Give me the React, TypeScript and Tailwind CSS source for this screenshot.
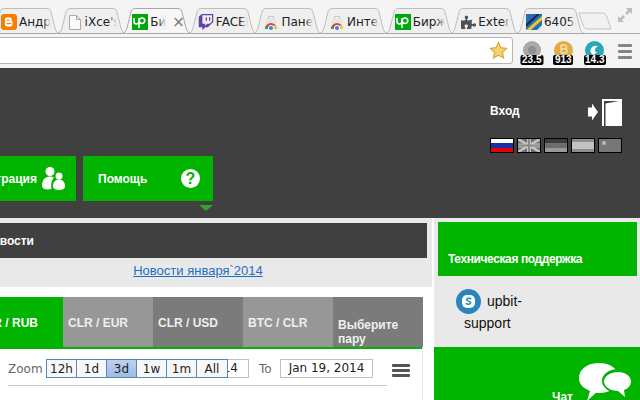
import { ReactNode } from "react";
import { FaTwitch, FaPuzzlePiece } from "react-icons/fa";

const UpLogo = () => (
  <div className="w-4 h-4 bg-[#00a80e] flex items-center justify-center shrink-0">
    <svg width="14" height="11" viewBox="0 0 14 11" fill="none" stroke="white" strokeWidth="1.6">
      <path d="M1 1v3.5a2.5 2.5 0 0 0 5 0V1M6 4.5c0-2 1-3.5 3-3.5a2.5 2.5 0 0 1 0 5.5c-1.4 0-2.2-.8-2.6-2M6 4.5V11" />
    </svg>
  </div>
);

const Blogger = () => (
  <svg width="16" height="16" viewBox="0 0 16 16" className="shrink-0">
    <rect width="16" height="16" rx="3" fill="#f57d00" />
    <path d="M5.5 3.5h3a2.2 2.2 0 0 1 2.2 2.4v.6c0 .5.3.7.8.7v3a2.4 2.4 0 0 1-2.4 2.3H6.2A2.3 2.3 0 0 1 3.9 10.3V5.6a2.1 2.1 0 0 1 1.6-2.1z" fill="white" />
    <path d="M6 6h2.2M6 9.7h3.8" stroke="#f57d00" strokeWidth="1.2" strokeLinecap="round" />
  </svg>
);

const Doc = () => (
  <svg width="16" height="16" viewBox="0 0 16 16" className="shrink-0" fill="#fafafa" stroke="#a9a9a9">
    <path d="M2.5 1.5h7l4 4v10h-11zM9.5 1.5v4h4" />
  </svg>
);

const Store = () => (
  <svg width="16" height="16" viewBox="0 0 16 16" className="shrink-0">
    <path d="M3 5h10l1.5 10h-13z" fill="#e6e6e6" />
    <path d="M5.5 5V2.5h5V5" fill="none" stroke="#c9c9c9" />
    <path d="M2 15a6 6 0 0 1 6-6 6 6 0 0 1 5 2.6L8 12z" fill="#dc4437" />
    <path d="M2 15a6 6 0 0 1 1-3.3L6 15z" fill="#2aa14a" />
    <path d="M13 11.6A6 6 0 0 1 14 15H10z" fill="#f4c20d" />
    <circle cx="8" cy="14" r="2.6" fill="#4285f4" stroke="white" />
  </svg>
);

const Puzzle = () => (
  <div className="w-4 h-4 flex items-center justify-center shrink-0">
    <FaPuzzlePiece size={15} color="#4b5257" />
  </div>
);

const TwitchIcon = () => (
  <div className="w-4 h-4 flex items-center justify-center shrink-0">
    <FaTwitch size={16} color="#6441a5" />
  </div>
);

const Ball = () => (
  <svg width="16" height="16" viewBox="0 0 16 16" className="shrink-0">
    <rect width="16" height="16" fill="#2a6cb0" />
    <path d="M0 16L16 2v4L5 16z" fill="#e9c33b" />
    <path d="M0 10L11 0h3L0 13z" fill="#10294f" />
    <path d="M11 16l5-5v5z" fill="#dfe8f2" />
  </svg>
);

const tabs: { icon: ReactNode; label: string; active?: boolean }[] = [
  { icon: <Blogger />, label: "Андрей" },
  { icon: <Doc />, label: "iXce's" },
  { icon: <UpLogo />, label: "Биржа", active: true },
  { icon: <TwitchIcon />, label: "FACEIT" },
  { icon: <Store />, label: "Панель" },
  { icon: <Store />, label: "Интернет" },
  { icon: <UpLogo />, label: "Биржа" },
  { icon: <Puzzle />, label: "Extensions" },
  { icon: <Ball />, label: "64058" },
];

const Tab = ({ icon, label, active }: { icon: ReactNode; label: string; active?: boolean }) => (
  <div className={`relative w-[71px] h-[26px] -mr-[5.4px] shrink-0 ${active ? "z-10" : ""}`}>
    <svg width="71" height="26" viewBox="0 0 71 26" className="absolute inset-0">
      <path
        d="M0 25.5C4 25.5 5 23 6 20L10 4C11 1 12 .5 15 .5H56C59 .5 60 1 61 4L65 20C66 23 67 25.5 71 25.5"
        fill={active ? "#f7f7f7" : "#efefef"}
        stroke={active ? "#a8a8a8" : "#bdbdbd"}
      />
    </svg>
    <div className="relative flex items-center pl-[11px] pt-[6px]">
      {icon}
      <div className={`relative ml-[2px] overflow-hidden whitespace-nowrap text-[12px] leading-4 text-[#222] ${active ? "w-[16px]" : "w-[32px]"}`}>
        {label}
        <div className="absolute inset-y-0 right-0 w-2 bg-gradient-to-r from-transparent to-[#efefef]" />
      </div>
      {active && <span className="ml-[6px] text-[15px] leading-4 text-[#777]">×</span>}
    </div>
  </div>
);

const Ext = ({ children, badge, w }: { children: ReactNode; badge: string; w: string }) => (
  <div className="relative w-[31.5px] h-[24px] flex justify-center shrink-0">
    {children}
    <div className={`absolute top-[14px] left-1/2 -translate-x-1/2 h-[10px] ${w} rounded-[2px] bg-black text-white text-[10px] leading-[10px] font-bold text-center font-['Liberation_Sans',sans-serif]`}>
      {badge}
    </div>
  </div>
);

const Chrome = () => (
  <div className="h-[68px] shrink-0 bg-[#f4f4f4] font-['DejaVu_Sans','Liberation_Sans',sans-serif]">
    <div className="h-[34px] flex items-end justify-between overflow-hidden border-b border-[#a9a9a9]">
      <div className="flex items-end -ml-[10px] -mb-px">
        {tabs.map((t, i) => (
          <Tab key={i} {...t} />
        ))}
        <svg width="34" height="18" viewBox="0 0 34 18" className="-ml-[2px] mb-[4px]">
          <path d="M1 1H24C27 1 28 3 29 5L33 17H9C7 17 6 16 5 13z" fill="#f1f1f1" stroke="#c4c4c4" />
        </svg>
      </div>
      <svg width="16" height="16" viewBox="0 0 16 16" fill="#b9bec0" className="mr-[7px] mb-[10px]">
        <path d="M9 1h6v6l-2-2-3 3-2-2 3-3zM1 15V9l2 2 3-3 2 2-3 3 2 2z" />
      </svg>
    </div>
    <div className="h-[33px] flex items-start pr-[8px]">
      <div className="w-[517px] -ml-1 h-[27px] mt-[3px] bg-white border border-[#b4b4b4] rounded-[3px] flex items-center justify-end pr-[4px] shrink-0">
        <svg width="19" height="19" viewBox="0 0 24 24" fill="#f7d36b" stroke="#d9a441" strokeWidth="1.4">
          <path d="M12 1.8l3.1 6.6 7.1.9-5.2 5 1.4 7.2-6.4-3.6-6.4 3.6 1.4-7.2-5.2-5 7.1-.9z" />
        </svg>
      </div>
      <div className="flex items-start ml-[3px] mt-[7px]">
        <Ext badge="23.5" w="w-[23px]">
          <div className="w-[18px] h-[18px] rounded-full bg-[#a9a9a9] flex items-center justify-center">
            <div className="w-2 h-2 rounded-full bg-[#8f8f8f]" />
          </div>
        </Ext>
        <Ext badge="913" w="w-[20px]">
          <svg width="19" height="19" viewBox="0 0 19 19">
            <circle cx="9.5" cy="9.5" r="9.5" fill="#e2ab45" />
            <path d="M7 4v8M7 4h3.500a2 2 0 0 1 0 4H7M7 8h4a2 2 0 0 1 0 4H7" fill="none" stroke="#f7e2b0" strokeWidth="1.400" />
          </svg>
        </Ext>
        <Ext badge="14.3" w="w-[22px]">
          <svg width="19" height="19" viewBox="0 0 19 19">
            <circle cx="9.5" cy="9.5" r="9.5" fill="#2aa9b5" />
            <path d="M6 12a5 5 0 0 1 7-6.5 4 4 0 0 0-3 5l2 1-4 2.500z" fill="white" />
          </svg>
        </Ext>
      </div>
      <div className="ml-auto flex flex-col gap-[3px] mt-[10px]">
        <div className="w-[14px] h-[3px] bg-[#858585] rounded-[1px]" />
        <div className="w-[14px] h-[3px] bg-[#858585] rounded-[1px]" />
        <div className="w-[14px] h-[3px] bg-[#858585] rounded-[1px]" />
      </div>
    </div>
  </div>
);

const Flag = ({ children }: { children: ReactNode }) => (
  <div className="w-[24px] h-[15px] border border-black flex flex-col overflow-hidden shrink-0">{children}</div>
);

const Flags = () => (
  <div className="flex gap-[3px] mt-[12px]">
    <Flag>
      <div className="flex-1 bg-white" />
      <div className="flex-1 bg-[#1e2fa0]" />
      <div className="flex-1 bg-[#e3000f]" />
    </Flag>
    <Flag>
      <svg width="22" height="13" viewBox="0 0 22 13">
        <rect width="22" height="13" fill="#6f6f6f" />
        <path d="M0 0l22 13M22 0L0 13" stroke="#c4c4c4" strokeWidth="2.500" />
        <path d="M11 0v13M0 6.500h22" stroke="#c4c4c4" strokeWidth="4" />
        <path d="M11 0v13M0 6.500h22" stroke="#8a8a8a" strokeWidth="2" />
      </svg>
    </Flag>
    <Flag>
      <div className="flex-1 bg-[#3c3c3c]" />
      <div className="flex-1 bg-[#6e6e6e]" />
      <div className="flex-1 bg-[#9a9a9a]" />
    </Flag>
    <Flag>
      <div className="flex-1 bg-[#8f8f8f]" />
      <div className="flex-[2] bg-[#c2c2c2]" />
      <div className="flex-1 bg-[#8f8f8f]" />
    </Flag>
    <Flag>
      <div className="flex-1 bg-[#777] relative">
        <div className="absolute left-[3px] top-[2px] w-[4px] h-[4px] rounded-full bg-[#bbb]" />
      </div>
    </Flag>
  </div>
);

const Header = () => (
  <div className="h-[150px] shrink-0 bg-[#404040] flex flex-col">
    <div className="flex justify-end pr-[18px] pt-[31px]">
      <div className="w-[132px]">
        <div className="flex items-center justify-between h-[27px]">
          <span className="text-[12px] font-bold text-white -mt-[3px]">Вход</span>
          <svg width="34" height="27" viewBox="0 0 34 27" fill="white">
            <path d="M0 9h4V5l6 8.500-6 8.500v-4H0z" transform="translate(0 -0.500)" />
            <path d="M14 0h20v27H14zM16 2v25h1.500V4.500L31 2z" fillRule="evenodd" />
          </svg>
        </div>
        <Flags />
      </div>
    </div>
    <div className="flex gap-[7px] mt-[3px]">
      <div className="w-[76px] h-[45px] bg-[#00b400] flex items-center justify-end pr-[10px] overflow-hidden text-white text-[12px] font-bold whitespace-nowrap shrink-0">
        <span className="mr-[4px]">Регистрация</span>
        <svg width="25" height="25" viewBox="0 0 25 25" fill="white" className="shrink-0">
          <circle cx="9" cy="5.500" r="4.500" />
          <path d="M1 20c0-6 3-9.500 8-9.500 1.500 0 3 .4 4 1.200-2 2-3.500 5-2.500 11.300C5 24 1 23 1 20z" />
          <circle cx="18" cy="10" r="3.500" />
          <path d="M12 20c0-4 2.500-6.500 6-6.500s6 2.500 6 6.500c0 3-3 4-6 4s-6-1-6-4z" />
        </svg>
      </div>
      <div className="w-[130px]">
        <div className="h-[45px] bg-[#00b400] flex items-center justify-between pl-[15px] pr-[13px] text-white text-[12px] font-bold">
          <span>Помощь</span>
          <div className="w-[19px] h-[19px] rounded-full bg-white text-[#00b400] text-[16px] leading-[19px] font-bold text-center">?</div>
        </div>
        <div className="flex justify-end mt-[4px]">
          <div className="w-0 h-0 border-x-[7.500px] border-x-transparent border-t-[6px] border-t-[#2ea52e]" />
        </div>
      </div>
    </div>
  </div>
);

const News = () => (
  <div className="h-[69px] w-[432px] bg-[#e9e9e9] pt-[5px] shrink-0">
    <div className="h-[35px] w-[427px] bg-[#404040] flex items-center">
      <div className="w-[34px] flex justify-end overflow-hidden whitespace-nowrap text-[12px] font-bold text-white">Новости</div>
    </div>
    <div className="w-[396px] text-center text-[13px] leading-[24px] mt-[1px] text-[#1f6fc4] underline">Новости января`2014</div>
  </div>
);

const pairs = [
  { label: "CLR / EUR", bg: "bg-[#979797]" },
  { label: "CLR / USD", bg: "bg-[#7b7b7b]" },
  { label: "BTC / CLR", bg: "bg-[#979797]" },
  { label: "Выберите пару", bg: "bg-[#7b7b7b]" },
];

const PairTabs = () => (
  <div className="flex h-[52px] border-b-2 border-[#00b400] text-[12px] font-bold text-[#eee]">
    <div className="w-[63px] bg-[#00b400] flex items-center justify-end pr-[25px] pt-[2px] overflow-hidden whitespace-nowrap text-white shrink-0">
      <span className="shrink-0">CLR / RUB</span>
    </div>
    {pairs.map((p) => (
      <div key={p.label} className={`w-[90px] shrink-0 ${p.bg} flex items-center px-[5px] leading-[14px] ${p.label.length > 10 ? "pt-[19px]" : "pt-[2px]"}`}>
        {p.label}
      </div>
    ))}
  </div>
);

const ranges = ["12h", "1d", "3d", "1w", "1m", "All"];

const ZoomRow = () => (
  <div className="border-b border-[#c8c8c8] mx-[8px] w-[379px] h-[37px] flex items-start pt-[10px] text-[12px] text-[#444] font-['DejaVu_Sans',sans-serif]">
    <span className="mt-[1px] text-[#666] w-[38px] shrink-0">Zoom</span>
    <div className="flex shrink-0 relative z-10 h-[19px] border border-[#5d86b5] bg-[#f8f8f8]">
      {ranges.map((r, i) => (
        <div
          key={r}
          className={`w-[30px] h-full flex items-center justify-center text-[#222] border-[#5d86b5] ${i < 5 ? "border-r" : ""} ${r === "3d" ? "bg-gradient-to-b from-[#bcd2ee] to-[#9fbce6]" : ""}`}
        >
          {r}
        </div>
      ))}
    </div>
    <div className="w-[21px] h-[19px] border border-[#c0c0c0] border-l-0 flex justify-end pr-[10px] leading-[17px] overflow-hidden text-[#222] shrink-0">
      <span className="shrink-0">14</span>
    </div>
    <span className="ml-[10px] mt-[1px] text-[#666] w-[21px]">To</span>
    <div className="w-[93px] h-[19px] border border-[#c0c0c0] text-center leading-[17px] text-[#222] shrink-0">Jan 19, 2014</div>
    <div className="ml-[19px] mt-[5px] flex flex-col gap-[2px] shrink-0 -mr-8">
      <div className="w-[18px] h-[3px] bg-[#555] rounded-[1px]" />
      <div className="w-[18px] h-[3px] bg-[#555] rounded-[1px]" />
      <div className="w-[18px] h-[3px] bg-[#555] rounded-[1px]" />
    </div>
  </div>
);

const Support = () => (
  <div className="flex-1 min-w-0 bg-[#e9e9e9] flex flex-col ml-[2px]">
    <div className="h-[54px] mt-[4px] ml-[4px] mr-[3px] bg-[#00b400] flex items-end pb-[8px] pl-[10px] text-[12px] font-bold text-white whitespace-nowrap shrink-0 tracking-[-0.4px]">
      Техническая поддержка
    </div>
    <div className="h-[71px] shrink-0 pl-[22px] pt-[13px] text-[14px] text-[#111]">
      <div className="flex items-center gap-[6px] h-[25px]">
        <svg width="25" height="25" viewBox="0 0 25 25" className="shrink-0">
          <circle cx="12.500" cy="12.500" r="12.500" fill="#2a85bd" />
          <rect x="6" y="6" width="13" height="13" rx="5" fill="white" />
          <path d="M15.200 10c-.6-.9-4.400-1.400-4.600.6-.2 1.900 4.300 1.200 4.100 3.300-.2 1.700-4.300 1.500-4.900.3" fill="none" stroke="#2a85bd" strokeWidth="1.500" />
        </svg>
        <span>upbit-</span>
      </div>
      <div className="pl-[8px] -mt-[1px]">support</div>
    </div>
    <div className="flex-1 bg-[#00b400] flex items-start">
      <span className="ml-[118px] mt-[41px] text-[12px] font-bold text-white">Чат</span>
      <svg width="56" height="40" viewBox="0 0 56 40" fill="white" className="ml-[6px] mt-[16px] shrink-0">
        <path d="M20 0c11 0 20 6 20 15 0 9-9 15-20 15-1 0-2 0-3-.2L8 38l3-10C4 25 0 21 0 15 0 6 9 0 20 0z" />
        <path d="M39 6c9 0 16 5 16 12 0 5-4 9-8 10l2 10-9-8c-9 0-17-5-17-12S30 6 39 6z" fill="#00b400" />
        <path d="M39 9c7 0 13 4 13 9.500 0 4.500-3.500 7.500-7 8.500l1 7-7-6c-7 0-14-4-14-9.500S32 9 39 9z" />
      </svg>
    </div>
  </div>
);

export default function App() {
  return (
    <div className="w-[640px] h-[400px] overflow-hidden flex flex-col bg-white font-['Liberation_Sans',Arial,sans-serif]">
      <Chrome />
      <Header />
      <div className="flex-1 min-h-0 flex">
        <div className="w-[432px] shrink-0 flex flex-col">
          <News />
          <div className="mt-[10px] w-[423px] flex-1 border-r border-[#e4e4e4]">
            <PairTabs />
            <ZoomRow />
          </div>
        </div>
        <Support />
      </div>
    </div>
  );
}
